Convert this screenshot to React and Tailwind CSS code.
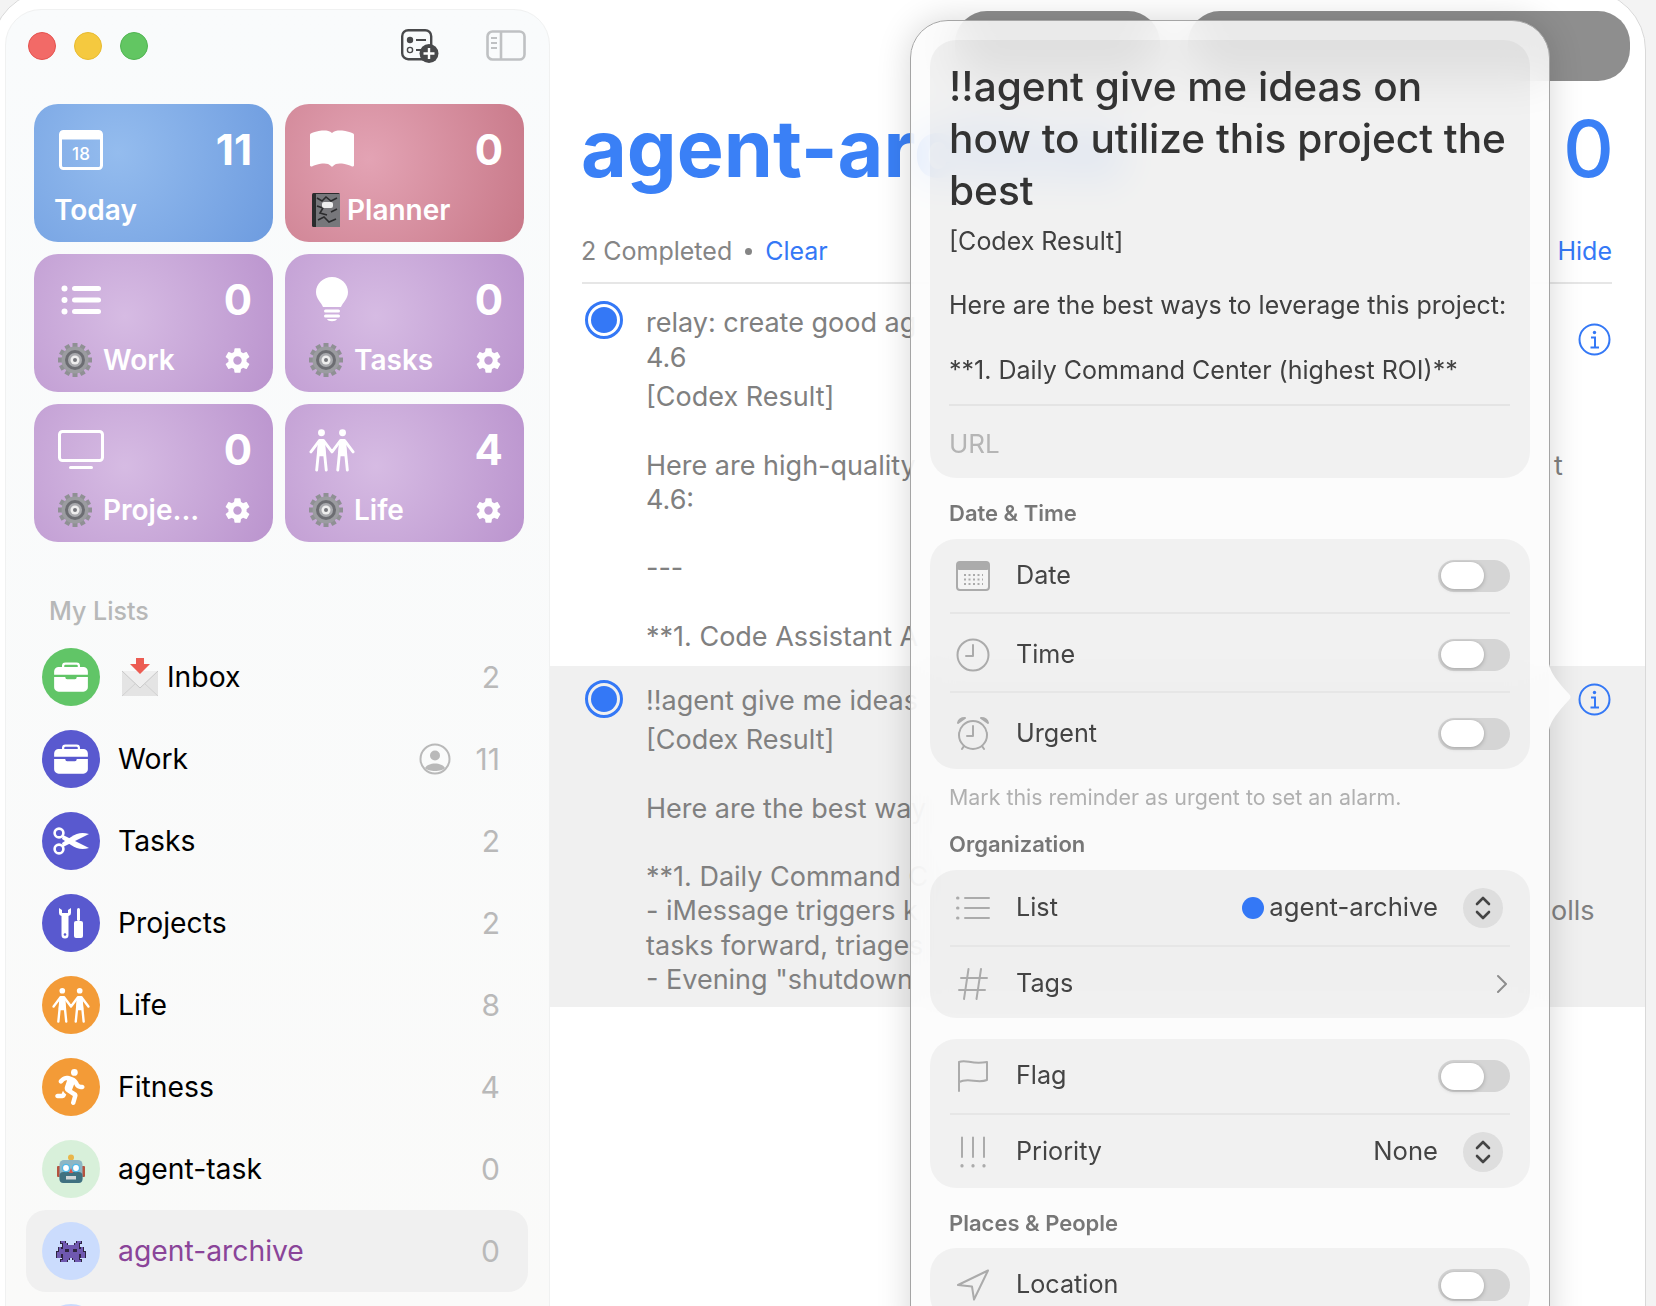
import React from 'react';
import { FaPersonRunning } from 'react-icons/fa6';
import { IoBriefcase, IoSettingsSharp } from 'react-icons/io5';
import { BsBookFill } from 'react-icons/bs';

function Couple({ size = 44, className = '' }) {
  return (
    <svg width={size} height={size} viewBox="0 0 48 46" className={className} fill="none" stroke="currentColor" strokeWidth="3" strokeLinecap="round" strokeLinejoin="round">
      <circle cx="13" cy="5" r="3.6" fill="currentColor" stroke="none" />
      <circle cx="35" cy="5" r="3.6" fill="currentColor" stroke="none" />
      <path d="M2 25 L11 13 H15 L24 25 L33 13 H37 L46 25" />
      <path d="M11 14 L8 44 M15 14 L18 44 M33 14 L30 44 M37 14 L40 44" />
      <path d="M11 15 H15 L16 28 H10 Z M33 15 H37 L38 28 H32 Z" fill="currentColor" />
    </svg>
  );
}

function GearEmoji() {
  const teeth = [0, 30, 60, 90, 120, 150, 180, 210, 240, 270, 300, 330];
  return (
    <svg width="36" height="36" viewBox="0 0 36 36" className="shrink-0">
      {teeth.map(a => (
        <rect key={a} x="15.5" y="1" width="5" height="7" fill="#8f9094" transform={`rotate(${a} 18 18)`} />
      ))}
      <circle cx="18" cy="18" r="13.5" fill="#9b9ca0" />
      <circle cx="18" cy="18" r="10" fill="#6c6d72" />
      <circle cx="18" cy="18" r="7" fill="#a9aaae" />
      <circle cx="18" cy="18" r="4.5" fill="#eeeeee" />
      <circle cx="18" cy="18" r="2" fill="#77787c" />
    </svg>
  );
}

function NotebookEmoji() {
  return (
    <svg width="30" height="36" viewBox="0 0 30 36" className="shrink-0">
      <rect x="1" y="1" width="28" height="34" rx="1.5" fill="#2b2b2d" />
      <rect x="5" y="2" width="24" height="33" fill="#77777b" />
      <path d="M6 6 l5 3 l4 -4 l5 4 l6 -3 M6 14 l6 2 l-3 5 l7 2 M20 20 l6 -3 M7 28 l6 -3 l5 5 l7 -3" stroke="#2b2b2d" strokeWidth="1.6" fill="none" />
      <rect x="11" y="10" width="11" height="6" rx="2" fill="#eeeeee" />
    </svg>
  );
}

function EnvelopeEmoji() {
  return (
    <svg width="38" height="40" viewBox="0 0 38 40" className="shrink-0">
      <rect x="1" y="14" width="36" height="25" fill="#e4e4e4" />
      <path d="M1 14 L19 31 L37 14" fill="#efefef" stroke="#c9c9c9" strokeWidth="1" />
      <path d="M1 39 L15 26 M37 39 L23 26" stroke="#d2d2d2" strokeWidth="1" />
      <path d="M15 1 H23 V7 H29 L19 17 L9 7 H15 Z" fill="#ec5c53" />
    </svg>
  );
}

function RobotEmoji() {
  return (
    <svg width="28" height="30" viewBox="0 0 28 30">
      <circle cx="14" cy="3.5" r="3" fill="#e9b64a" />
      <rect x="0" y="12" width="4" height="11" rx="1" fill="#b5533f" />
      <rect x="24" y="12" width="4" height="11" rx="1" fill="#b5533f" />
      <rect x="2.5" y="6" width="23" height="23" rx="4.5" fill="#8db6c4" />
      <rect x="2.5" y="18" width="23" height="11" rx="4" fill="#3f7180" />
      <circle cx="9" cy="14" r="3.6" fill="#fff" stroke="#50b8e8" strokeWidth="1.4" />
      <circle cx="19" cy="14" r="3.6" fill="#fff" stroke="#50b8e8" strokeWidth="1.4" />
      <path d="M14 14 l2 5 h-4 Z" fill="#d9534a" />
      <rect x="9" y="22" width="10" height="3.5" fill="#cfd6d8" />
    </svg>
  );
}

function AlienEmoji() {
  const rows = [
    '..##......##..',
    '...##....##...',
    '...########...',
    '.#.########.#.',
    '.###.####.###.',
    '##############',
    '##.########.##',
    '##.########.##',
    '...###..###...',
    '..###....###..',
  ];
  const cells = [];
  rows.forEach((r, y) => r.split('').forEach((c, x) => { if (c === '#') cells.push([x, y]); }));
  return (
    <svg width="30" height="23" viewBox="-0.4 -0.4 14.8 10.8" shapeRendering="crispEdges">
      {cells.map(([x, y]) => <rect key={`o${x}-${y}`} x={x - 0.35} y={y - 0.35} width="1.7" height="1.7" fill="#2e2440" />)}
      {cells.map(([x, y]) => <rect key={`b${x}-${y}`} x={x} y={y} width="1" height="1" fill={y === 4 && (x === 5 || x === 8) ? '#2e2440' : '#6f58b0'} />)}
    </svg>
  );
}

function Scissors() {
  return (
    <svg width="38" height="28" viewBox="0 0 38 28" fill="none">
      <circle cx="7" cy="6" r="4.4" stroke="#fff" strokeWidth="2.6" />
      <circle cx="7" cy="22" r="4.4" stroke="#fff" strokeWidth="2.6" />
      <path d="M11 8 L37 21 C30 23 25 22 19 18 L10 12 Z" fill="#fff" />
      <path d="M11 20 L37 7 C30 5 25 6 19 10 L10 16 Z" fill="#fff" />
    </svg>
  );
}

function Bulb() {
  return (
    <svg width="32" height="46" viewBox="0 0 32 46" fill="#fff">
      <path d="M16 0 C7 0 0 7 0 15 C0 22 5 25 7 30 H25 C27 25 32 22 32 15 C32 7 25 0 16 0 Z" />
      <rect x="8" y="32.5" width="16" height="3" rx="1.5" />
      <rect x="8" y="37.5" width="16" height="3" rx="1.5" />
      <path d="M11 42 H21 C20 45 12 45 11 42 Z" />
    </svg>
  );
}

function Tools() {
  return (
    <svg width="30" height="32" viewBox="0 0 30 32" fill="#fff">
      <path d="M3 1 V6 a3 3 0 0 0 2.5 3 V28 a3.5 3.5 0 0 0 7 0 V9 a3 3 0 0 0 2.5 -3 V1 l-3 2 V6 H6 V3 Z" />
      <circle cx="9" cy="27.5" r="1.3" fill="#5959cf" />
      <rect x="21" y="1" width="3" height="13" rx="1.5" />
      <rect x="18" y="14" width="9" height="17" rx="2" />
    </svg>
  );
}

function PersonCircle() {
  return (
    <svg width="32" height="32" viewBox="0 0 32 32" fill="none">
      <circle cx="16" cy="16" r="14.5" stroke="#b9b9b9" strokeWidth="2" />
      <circle cx="16" cy="12.5" r="5" fill="#b9b9b9" />
      <path d="M6 25 C9 19 23 19 26 25 C23 29 9 29 6 25 Z" fill="#b9b9b9" />
    </svg>
  );
}

function SmartCard({ tone, icon, count, emoji, label, gear, labelClass = '' }) {
  return (
    <div className={`h-[138px] rounded-[24px] text-white ${tone} flex flex-col`}>
      <div className="mt-[24px] h-[44px] pl-[24px] pr-[21px] flex items-center justify-between">
        <div className="w-[46px] flex items-center justify-center">{icon}</div>
        <span className="text-[42px] leading-none font-bold">{count}</span>
      </div>
      <div className="mt-[14px] h-[48px] pl-[23px] pr-[22px] flex items-center">
        {emoji}
        <span className={`text-[28px] font-semibold ${labelClass}`}>{label}</span>
        {gear && <IoSettingsSharp size={27} className="ml-auto" />}
      </div>
    </div>
  );
}

const purple = 'bg-[radial-gradient(circle_at_38%_45%,#d6bbe3,#bc96cf_95%)]';

const lists = [
  { name: 'Inbox', count: 2, bg: 'bg-[#61c567]', icon: <IoBriefcase size={36} color="#fff" />, emoji: <EnvelopeEmoji /> },
  { name: 'Work', count: 11, bg: 'bg-[#5959cf]', icon: <IoBriefcase size={36} color="#fff" />, shared: true },
  { name: 'Tasks', count: 2, bg: 'bg-[#5959cf]', icon: <Scissors /> },
  { name: 'Projects', count: 2, bg: 'bg-[#5959cf]', icon: <Tools /> },
  { name: 'Life', count: 8, bg: 'bg-[#f39b37]', icon: <Couple size={38} className="text-white" /> },
  { name: 'Fitness', count: 4, bg: 'bg-[#f39b37]', icon: <FaPersonRunning size={36} color="#fff" /> },
  { name: 'agent-task', count: 0, bg: 'bg-[#d8f0da]', icon: <RobotEmoji /> },
  { name: 'agent-archive', count: 0, bg: 'bg-[#cbdcfd]', icon: <AlienEmoji />, active: true },
];

function Sidebar() {
  return (
    <aside className="mt-[18px] ml-[13px] w-[545px] shrink-0 rounded-t-[36px] bg-gradient-to-b from-[#f9fbfc] to-[#fafaf9] border border-[#f0f1f1] h-[1320px]">
      <div className="h-[72px] pl-[22px] pr-[23px] flex items-center">
        <span className="w-[28px] h-[28px] rounded-full bg-[#f26a67] border border-[#e5524f]" />
        <span className="ml-[18px] w-[28px] h-[28px] rounded-full bg-[#f5c93f] border border-[#e8bb30]" />
        <span className="ml-[18px] w-[28px] h-[28px] rounded-full bg-[#62c662] border border-[#50b552]" />
        <svg width="38" height="34" viewBox="0 0 38 34" fill="none" className="ml-auto">
          <rect x="1.2" y="1.2" width="29" height="29" rx="6" stroke="#48494b" strokeWidth="2.4" />
          <circle cx="9" cy="11" r="3.2" fill="#48494b" />
          <circle cx="9" cy="21" r="2.6" stroke="#48494b" strokeWidth="1.4" />
          <path d="M15 11 H25 M15 21 H20" stroke="#48494b" strokeWidth="2" />
          <circle cx="28" cy="24.5" r="9.5" fill="#48494b" />
          <path d="M28 19 V30 M22.5 24.5 H33.5" stroke="#fff" strokeWidth="2.4" />
        </svg>
        <svg width="40" height="32" viewBox="0 0 40 32" fill="none" className="ml-[47px]">
          <rect x="1.5" y="1.5" width="37" height="28" rx="5" stroke="#bfc1c3" strokeWidth="2.6" />
          <path d="M15 1.5 V29.5" stroke="#bfc1c3" strokeWidth="2.6" />
          <path d="M5 8 H11 M5 13 H11 M5 18 H11" stroke="#bfc1c3" strokeWidth="2" />
        </svg>
      </div>
      <div className="mt-[22px] ml-[28px] w-[490px] grid grid-cols-2 gap-3">
        <SmartCard
          tone="bg-[radial-gradient(circle_at_35%_35%,#94bcee,#6f9de0_95%)]"
          icon={
            <svg width="44" height="40" viewBox="0 0 44 40" fill="none">
              <rect x="1.5" y="1.5" width="41" height="37" rx="3" stroke="#fff" strokeWidth="3" />
              <rect x="1.5" y="1.5" width="41" height="8" fill="#fff" />
              <text x="22" y="30" fontSize="17" fontFamily="Inter, sans-serif" fontWeight="500" fill="#fff" textAnchor="middle">18</text>
            </svg>
          }
          count="11"
          label="Today"
          labelClass="-ml-[3px]"
        />
        <SmartCard
          tone="bg-[radial-gradient(circle_at_35%_40%,#e3a3b4,#c97a8a_95%)]"
          icon={<BsBookFill size={44} />}
          count="0"
          emoji={<span className="ml-[3px] mr-[6px]"><NotebookEmoji /></span>}
          label="Planner"
        />
        <SmartCard
          tone={purple}
          icon={
            <svg width="40" height="30" viewBox="0 0 40 30" fill="#fff">
              <circle cx="3.5" cy="3.5" r="3" /><circle cx="3.5" cy="15" r="3" /><circle cx="3.5" cy="26.5" r="3" />
              <rect x="11" y="1" width="29" height="5" rx="2.5" /><rect x="11" y="12.5" width="29" height="5" rx="2.5" /><rect x="11" y="24" width="29" height="5" rx="2.5" />
            </svg>
          }
          count="0"
          emoji={<span className="mr-[10px] flex"><GearEmoji /></span>}
          label="Work"
          gear
        />
        <SmartCard
          tone={purple}
          icon={<Bulb />}
          count="0"
          emoji={<span className="mr-[10px] flex"><GearEmoji /></span>}
          label="Tasks"
          gear
        />
        <SmartCard
          tone={purple}
          icon={
            <svg width="46" height="40" viewBox="0 0 46 40" fill="none">
              <rect x="1.5" y="1.5" width="43" height="29" rx="3" stroke="#fff" strokeWidth="3" />
              <rect x="11" y="36" width="24" height="3" rx="1.5" fill="#fff" />
            </svg>
          }
          count="0"
          emoji={<span className="mr-[10px] flex"><GearEmoji /></span>}
          label="Proje..."
          gear
        />
        <SmartCard
          tone={purple}
          icon={<Couple size={48} className="text-white" />}
          count="4"
          emoji={<span className="mr-[10px] flex"><GearEmoji /></span>}
          label="Life"
          gear
        />
      </div>
      <div className="mt-[52px] ml-[43px] h-[34px] leading-[34px] text-[25px] font-medium text-[#b7b8b8]">My Lists</div>
      <div className="mt-[8px] ml-[20px] w-[502px]">
        {lists.map(l => (
          <div key={l.name} className={`h-[82px] pl-[16px] pr-[28px] flex items-center rounded-[20px] ${l.active ? 'bg-[#f0f0f0]' : ''}`}>
            <div className={`w-[58px] h-[58px] rounded-full flex items-center justify-center shrink-0 ${l.bg}`}>{l.icon}</div>
            {l.emoji && <span className="ml-[21px] flex">{l.emoji}</span>}
            <span className={`${l.emoji ? 'ml-[8px]' : 'ml-[18px]'} text-[28.3px] ${l.active ? 'text-[#8a4499]' : 'text-black'}`}>{l.name}</span>
            {l.shared && <span className="ml-auto mr-[25px] flex"><PersonCircle /></span>}
            <span className={`${l.shared ? '' : 'ml-auto'} text-[30px] text-[#b9b9b9]`}>{l.count}</span>
          </div>
        ))}
        <div className="h-[82px] pl-[16px] pt-[12px]">
          <div className="w-[58px] h-[58px] rounded-full bg-[#cbdcfd]" />
        </div>
      </div>
    </aside>
  );
}

function Radio({ className = '' }) {
  return (
    <div className={`w-[38px] h-[38px] shrink-0 rounded-full border-[3px] border-[#3478f6] p-[3px] ${className}`}>
      <div className="w-full h-full rounded-full bg-[#3478f6]" />
    </div>
  );
}

function InfoIcon({ className = '' }) {
  return (
    <svg width="33" height="33" viewBox="0 0 33 33" fill="none" className={`shrink-0 ${className}`}>
      <circle cx="16.5" cy="16.5" r="15" stroke="#3478f6" strokeWidth="2" />
      <circle cx="16.5" cy="9.5" r="1.7" fill="#3478f6" />
      <path d="M13 14.5 H17 V24 M12.5 24.5 H21" stroke="#3478f6" strokeWidth="2" />
    </svg>
  );
}

function NoteLine({ text, tail, tailClass = '' }) {
  return (
    <div className="h-[34.3px] leading-[34.3px] flex whitespace-pre">
      <span>{text || '\u00a0'}</span>
      {tail && <span className={`absolute ${tailClass}`}>{tail}</span>}
    </div>
  );
}

function Main() {
  return (
    <main className="relative flex-1 min-w-0 mt-[20px] font-normal">
      <div className="h-[70px] pl-[405px] flex gap-[28px]">
        <div className="w-[205px] rounded-[32px] bg-[#8e8e8e]" />
        <div className="w-[442px] rounded-[32px] bg-[#8e8e8e]" />
      </div>
      <div className="mt-[12px] h-[110px] pl-[31px] pr-[31px] flex items-center justify-between text-[#3a80f6] text-[79px] leading-[110px]">
        <span className="font-bold">agent-archive</span>
        <span className="font-medium">0</span>
      </div>
      <div className="mt-[16px] h-[63px] pt-[2px] pl-[31px] pr-[33px] flex items-center text-[25px] text-[#858585]">
        <span>2 Completed</span>
        <span className="mx-[13px] w-[7px] h-[7px] rounded-full bg-[#858585]" />
        <span className="text-[#3478f6]">Clear</span>
        <span className="ml-auto text-[#3478f6]">Hide</span>
      </div>
      <div className="ml-[32px] mr-[33px] h-[2px] bg-[#e6e6e6]" />
      <div className="h-[382px] pl-[35px] pr-[34px] flex text-[27px] text-[#808080]">
        <Radio className="mt-[17px]" />
        <div className="ml-[23px] pt-[21px] flex-1 min-w-0">
          <div className="leading-[35px]">relay: create good ag</div>
          <div className="leading-[35px]">4.6</div>
          <div className="mt-[5px]">
            <NoteLine text="[Codex Result]" />
            <NoteLine />
            <div className="relative">
              <NoteLine text="Here are high-quality" tail="t" tailClass="left-[908px]" />
            </div>
            <NoteLine text="4.6:" />
            <NoteLine />
            <NoteLine text="---" />
            <NoteLine />
            <NoteLine text="**1. Code Assistant A" />
          </div>
        </div>
        <InfoIcon className="mt-[39px]" />
      </div>
      <div className="h-[341px] pl-[35px] pr-[34px] flex text-[27px] text-[#808080] bg-[#f0f0f0]">
        <Radio className="mt-[14px]" />
        <div className="ml-[23px] pt-[17px] flex-1 min-w-0">
          <div className="leading-[35px]">!!agent give me ideas</div>
          <div className="mt-[5px]">
            <NoteLine text="[Codex Result]" />
            <NoteLine />
            <NoteLine text="Here are the best way" />
            <NoteLine />
            <NoteLine text="**1. Daily Command C" />
            <div className="relative">
              <NoteLine text="- iMessage triggers k" tail="olls" tailClass="left-[905px]" />
            </div>
            <NoteLine text="tasks forward, triages" />
            <NoteLine text={'- Evening "shutdown'} />
          </div>
        </div>
        <InfoIcon className="mt-[17px]" />
      </div>
    </main>
  );
}

function Toggle() {
  return (
    <div className="ml-auto w-[72px] h-[32px] rounded-full bg-[#d5d5d5] flex items-center pl-[3px]">
      <div className="w-[43px] h-[27px] rounded-full bg-white shadow-[0_1px_4px_rgba(0,0,0,0.25)]" />
    </div>
  );
}

function Stepper() {
  return (
    <div className="ml-[25px] mr-[7px] w-[40px] h-[40px] rounded-full bg-[#dedede] flex items-center justify-center">
      <svg width="16" height="26" viewBox="0 0 16 26" fill="none" stroke="#444" strokeWidth="2.6" strokeLinecap="round" strokeLinejoin="round">
        <path d="M2 9 L8 3 L14 9 M2 17 L8 23 L14 17" />
      </svg>
    </div>
  );
}

function Row({ icon, label, h, children, divider }) {
  return (
    <div className={divider ? 'border-b-2 border-[#e6e6e6]' : ''}>
      <div className={`flex items-center ${h}`}>
        <div className="w-[46px] flex items-center justify-center shrink-0">{icon}</div>
        <span className="ml-[20px] text-[25.2px] text-[#444]">{label}</span>
        {children}
      </div>
    </div>
  );
}

function GroupLabel({ children, className = '' }) {
  return <div className={`h-[34px] leading-[34px] pl-[19px] text-[22px] font-semibold text-[#777] ${className}`}>{children}</div>;
}

function Popover() {
  const stroke = { fill: 'none', stroke: '#ababab', strokeWidth: 2, strokeLinecap: 'round', strokeLinejoin: 'round' };
  return (
    <div className="absolute left-[910px] top-[20px] w-[640px] h-[1340px]">
      <div className="w-full h-full rounded-[38px] border border-[#a5a5a5] bg-[#fbfbfb]/[0.84] backdrop-blur-[22px] shadow-[0_0_34px_rgba(0,0,0,0.16)] px-[19px] pt-[19px]">
        <div className="h-[438px] rounded-[26px] bg-black/[0.045] pl-[19px] pr-[20px] pt-[21px]">
          <div className="text-[40.6px] leading-[52px] font-medium text-[#333] whitespace-nowrap">
            !!agent give me ideas on<br />how to utilize this project the<br />best
          </div>
          <div className="mt-[8px] text-[25px] leading-[32.2px] text-[#404040] whitespace-nowrap">
            <div>[Codex Result]</div>
            <div>&nbsp;</div>
            <div>Here are the best ways to leverage this project:</div>
            <div>&nbsp;</div>
            <div>**1. Daily Command Center (highest ROI)**</div>
          </div>
          <div className="mt-[18px] h-[2px] bg-[#e4e4e4]" />
          <div className="mt-[20px] text-[26px] leading-[36px] text-[#b5b5b5]">URL</div>
        </div>

        <GroupLabel className="mt-[18px] mb-[9px]">Date &amp; Time</GroupLabel>
        <div className="rounded-[26px] bg-black/[0.045] px-[20px]">
          <Row
            h="h-[73px]"
            divider
            label="Date"
            icon={
              <svg width="34" height="30" viewBox="0 0 34 30">
                <rect x="1" y="1" width="32" height="28" rx="3" fill="#f4f4f4" stroke="#ababab" strokeWidth="2" />
                <rect x="1" y="1" width="32" height="8" rx="2" fill="#ababab" />
                <path d="M8 14 H27 M8 18.5 H27 M8 23 H27" stroke="#ababab" strokeWidth="2" strokeDasharray="2 2.5" />
              </svg>
            }
          >
            <Toggle />
          </Row>
          <Row
            h="h-[77px] pt-[4px]"
            divider
            label="Time"
            icon={
              <svg width="34" height="34" viewBox="0 0 34 34" {...stroke}>
                <circle cx="17" cy="17" r="15.5" />
                <path d="M17 7 V18 H10" />
              </svg>
            }
          >
            <Toggle />
          </Row>
          <Row
            h="h-[76px] pt-[5px]"
            label="Urgent"
            icon={
              <svg width="34" height="36" viewBox="0 0 34 36" {...stroke}>
                <circle cx="17" cy="19" r="14" />
                <path d="M17 10 V20 H11 M6 33 L8 30 M28 33 L26 30" />
                <path d="M2 7 Q3 2 9 2 Z M32 7 Q31 2 25 2 Z" fill="#ababab" />
              </svg>
            }
          >
            <Toggle />
          </Row>
        </div>
        <div className="mt-[11px] h-[34px] leading-[34px] pl-[19px] text-[21.4px] text-[#b0b0b0]">Mark this reminder as urgent to set an alarm.</div>

        <GroupLabel className="mt-[13px] mb-[9px]">Organization</GroupLabel>
        <div className="rounded-[26px] bg-black/[0.045] px-[20px]">
          <Row
            h="h-[75px]"
            divider
            label="List"
            icon={
              <svg width="34" height="24" viewBox="0 0 34 24" {...stroke}>
                <path d="M9 2 H33 M9 12 H33 M9 22 H33" />
                <path d="M1.5 2 H2 M1.5 12 H2 M1.5 22 H2" strokeWidth="3" />
              </svg>
            }
          >
            <span className="ml-auto w-[22px] h-[22px] rounded-full bg-[#3478f6]" />
            <span className="ml-[5px] text-[25.7px] text-[#444]">agent-archive</span>
            <Stepper />
          </Row>
          <Row
            h="h-[71px] pt-[2px]"
            label="Tags"
            icon={
              <svg width="30" height="34" viewBox="0 0 30 34" {...stroke}>
                <path d="M10.5 2 L6 32 M23 2 L18.5 32 M3 11 H29 M1 23 H27" />
              </svg>
            }
          >
            <svg width="12" height="20" viewBox="0 0 12 20" fill="none" stroke="#8d8d8d" strokeWidth="2" strokeLinecap="round" strokeLinejoin="round" className="ml-auto mr-[2px]">
              <path d="M2 2 L10 10 L2 18" />
            </svg>
          </Row>
        </div>

        <div className="mt-[21px] rounded-[26px] bg-black/[0.045] px-[20px]">
          <Row
            h="h-[74px]"
            divider
            label="Flag"
            icon={
              <svg width="32" height="34" viewBox="0 0 32 34" {...stroke}>
                <path d="M2 32 V3 C10 0 14 6 30 3 V21 C20 25 12 18 2 23" />
              </svg>
            }
          >
            <Toggle />
          </Row>
          <Row
            h="h-[73px]"
            label="Priority"
            icon={
              <svg width="30" height="32" viewBox="0 0 30 32" {...stroke}>
                <path d="M4 1.5 V21 M15 1.5 V21 M26 1.5 V21" />
                <path d="M4 29.5 V30 M15 29.5 V30 M26 29.5 V30" strokeWidth="3.2" />
              </svg>
            }
          >
            <span className="ml-auto text-[25.6px] text-[#444]">None</span>
            <Stepper />
          </Row>
        </div>

        <GroupLabel className="mt-[18px] mb-[8px]">Places &amp; People</GroupLabel>
        <div className="rounded-[26px] bg-black/[0.045] px-[20px]">
          <Row
            h="h-[74px]"
            label="Location"
            icon={
              <svg width="34" height="32" viewBox="0 0 34 32" {...stroke}>
                <path d="M32 1.5 L2 16 L16 17.5 L18 30.5 Z" />
              </svg>
            }
          >
            <Toggle />
          </Row>
        </div>
      </div>
      <svg width="24" height="66" viewBox="0 0 24 66" className="absolute left-[639px] top-[644px]">
        <path d="M0 0 C2 10 9 18 20 30 Q23 33 20 36 C9 48 2 56 0 66 Z" fill="#fbfbfb" />
      </svg>
    </div>
  );
}

export default function App() {
  return (
    <div className="relative w-[1656px] h-[1306px] overflow-hidden bg-[#f3f3f3] font-['Inter','Noto_Sans',sans-serif]">
      <div className="-mt-[10px] -ml-[9px] w-[1655px] h-[1340px] flex rounded-t-[60px] bg-white border border-[#d9d9d9]">
        <Sidebar />
        <Main />
      </div>
      <Popover />
    </div>
  );
}
